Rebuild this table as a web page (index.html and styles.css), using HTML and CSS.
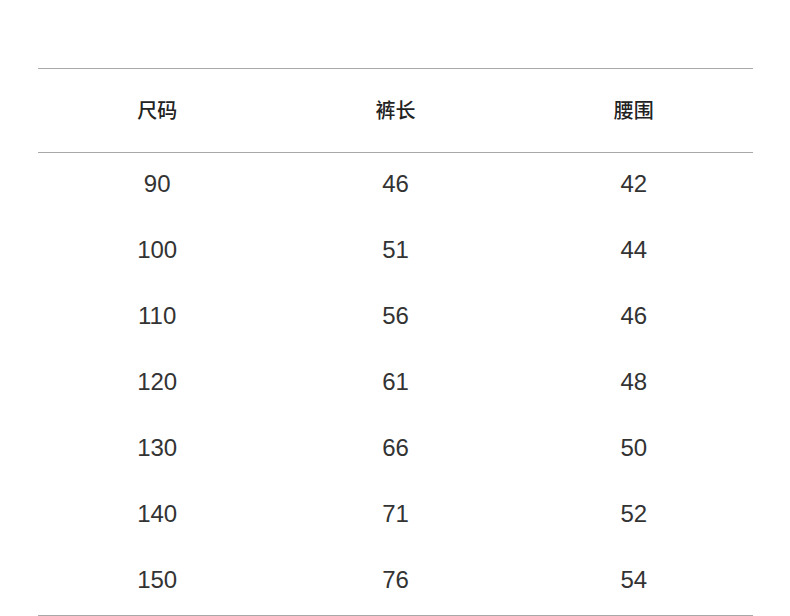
FILE: index.html
```html
<!DOCTYPE html>
<html lang="zh">
<head>
<meta charset="utf-8">
<link rel="stylesheet" href="styles.css">
</head>
<body>
<div class="sheet">
  <div class="table">
    <div class="row head">
      <div class="cell">尺码</div>
      <div class="cell">裤长</div>
      <div class="cell">腰围</div>
    </div>
    <div class="body">
      <div class="row"><div class="cell">90</div><div class="cell">46</div><div class="cell">42</div></div>
      <div class="row"><div class="cell">100</div><div class="cell">51</div><div class="cell">44</div></div>
      <div class="row"><div class="cell">110</div><div class="cell">56</div><div class="cell">46</div></div>
      <div class="row"><div class="cell">120</div><div class="cell">61</div><div class="cell">48</div></div>
      <div class="row"><div class="cell">130</div><div class="cell">66</div><div class="cell">50</div></div>
      <div class="row"><div class="cell">140</div><div class="cell">71</div><div class="cell">52</div></div>
      <div class="row"><div class="cell">150</div><div class="cell">76</div><div class="cell">54</div></div>
    </div>
  </div>
</div>
</body>
</html>
```
FILE: styles.css
```css
html, body {
  margin: 0;
  padding: 0;
  background: #ffffff;
}
.sheet {
  width: 790px;
  height: 616px;
  padding: 68px 0 0 38px;
  box-sizing: border-box;
  overflow: hidden;
}
.table {
  width: 715px;
  border-top: 1px solid #a8a8a8;
  border-bottom: 1px solid #a8a8a8;
}
.row {
  display: grid;
  grid-template-columns: 1fr 1fr 1fr;
  align-items: center;
  height: 66px;
}
.row.head {
  height: 83px;
  border-bottom: 1px solid #a8a8a8;
}
.cell {
  text-align: center;
  font-family: "Liberation Sans", "Noto Sans CJK SC", sans-serif;
  font-size: 24px;
  color: #333333;
  line-height: 1;
}
.body .cell {
  padding-bottom: 4px;
}
.head .cell {
  font-family: "Noto Sans CJK SC", sans-serif;
  font-size: 20px;
  font-weight: 500;
  color: #222222;
  padding-bottom: 2px;
}
```
